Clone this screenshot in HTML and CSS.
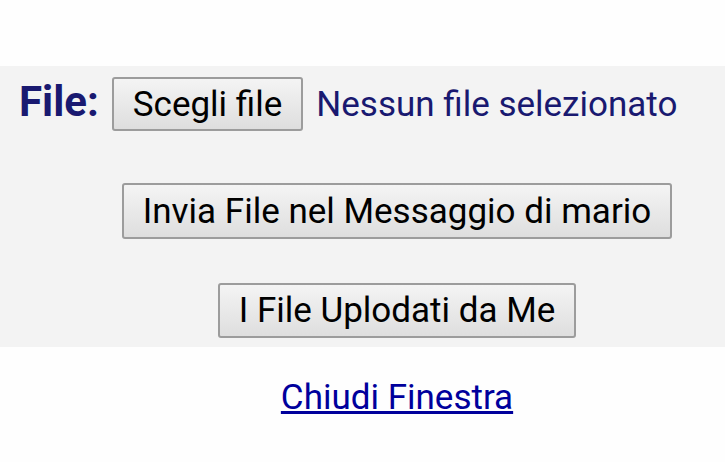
FILE: index.html
```html
<!DOCTYPE html>
<html>
<head>
<meta charset="utf-8">
<link rel="stylesheet" href="styles.css">
</head>
<body>
<div class="spacer"></div>
<div class="panel">
  <div class="file-row">
    <span class="label">File:</span>
    <button class="btn">Scegli file</button>
    <span class="status">Nessun file selezionato</span>
  </div>
  <div class="center-row send-row"><button class="btn">Invia File nel Messaggio di mario</button></div>
  <div class="center-row my-row"><button class="btn">I File Uplodati da Me</button></div>
</div>
<div class="close-row"><a href="#" class="close">Chiudi Finestra</a></div>
</body>
</html>
```
FILE: styles.css
```css
html, body {
  margin: 0;
  background: #fefefe;
  font-family: Roboto, "Noto Sans", sans-serif;
}
.spacer { height: 66px; }
.panel {
  background: #f3f3f3;
  height: 281px;
  box-sizing: border-box;
  padding-top: 11px;
}
.file-row {
  display: flex;
  align-items: baseline;
  gap: 13px;
  padding-left: 19px;
  height: 54px;
}
.label {
  font-weight: bold;
  font-size: 42px;
  line-height: 1;
  color: #191970;
}
.status {
  font-size: 35px;
  line-height: 1;
  color: #191970;
}
.btn {
  font-family: Roboto, sans-serif;
  font-size: 35px;
  color: #000;
  background: linear-gradient(#f4f4f4, #dedede);
  border: 2px solid #9c9c9c;
  border-radius: 3px;
  height: 54px;
  padding: 0 19px;
  line-height: 1;
}
.center-row {
  display: flex;
  justify-content: center;
  padding-left: 69px;
}
.send-row { margin-top: 52px; }
.send-row .btn { height: 56px; }
.my-row { margin-top: 44px; }
.my-row .btn { height: 55px; }
.close-row {
  display: flex;
  justify-content: center;
  padding-left: 69px;
  padding-top: 30px;
}
.close {
  font-size: 35px;
  color: #00009c;
}
```
